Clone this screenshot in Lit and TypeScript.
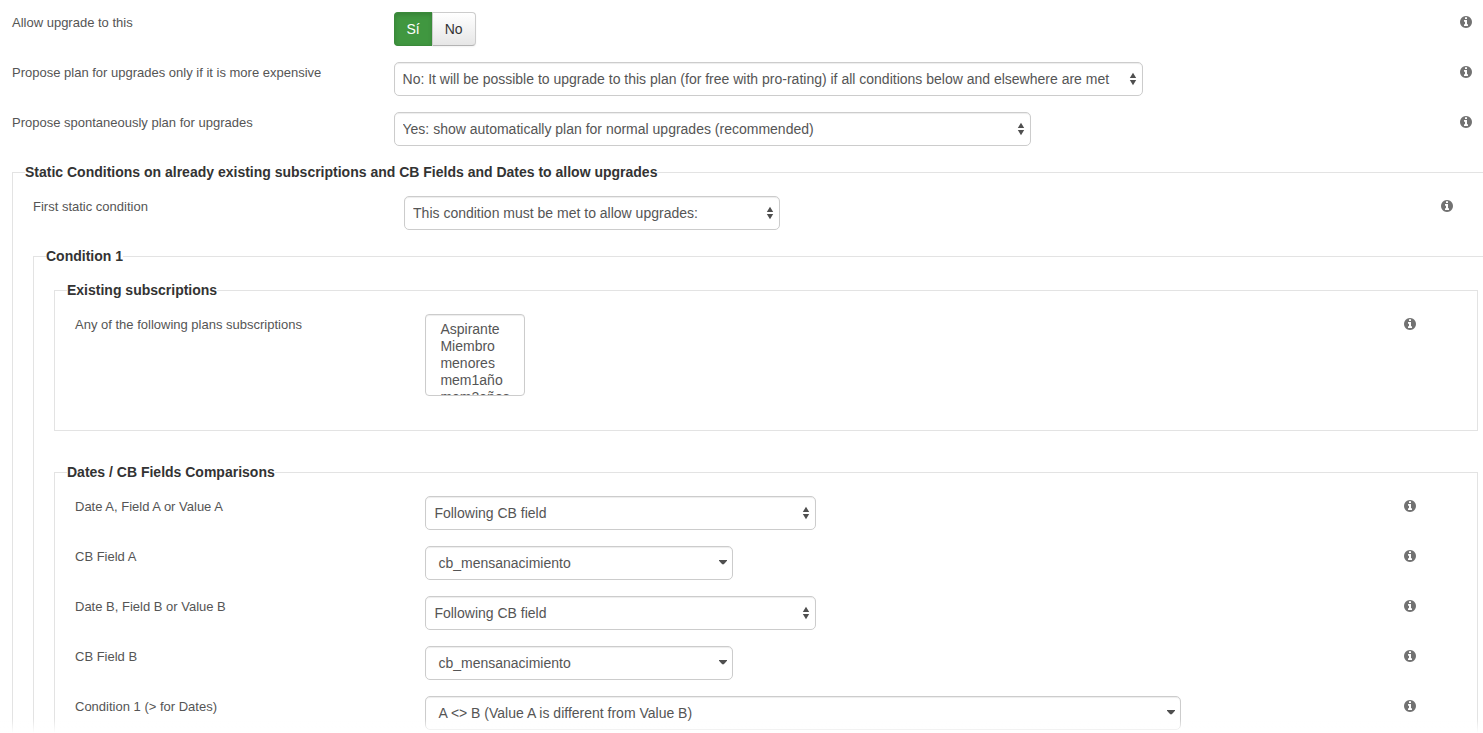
import { LitElement, html, svg, css, nothing } from "lit";
import { customElement, property } from "lit/decorators.js";

type Level = "outer" | "middle" | "inner";

const infoIcon = svg`<svg class="info-icon" viewBox="128 128 1536 1536" aria-hidden="true">
  <path d="M1152 1376v-160q0 -14 -9 -23t-23 -9h-96v-512q0 -14 -9 -23t-23 -9h-320q-14 0 -23 9t-9 23v160q0 14 9 23t23 9h96v320h-96q-14 0 -23 9t-9 23v160q0 14 9 23t23 9h448q14 0 23 -9t9 -23zM1024 480v-160q0 -14 -9 -23t-23 -9h-192q-14 0 -23 9t-9 23v160q0 14 9 23t23 9h192q14 0 23 -9t9 -23zM1664 896q0 209 -103 385.5t-279.5 279.5t-385.5 103t-385.5 -103t-279.5 -279.5t-103 -385.5t103 -385.5t279.5 -279.5t385.5 -103t385.5 103t279.5 279.5t103 385.5z"/>
</svg>`;

/** A drop-down with either the double stepper arrows or a single caret. */
@customElement("select-box")
class SelectBox extends LitElement {
  @property() label = "";
  @property() value = "";
  @property() arrow: "stepper" | "caret" = "stepper";

  static styles = css`
    :host {
      display: grid;
      max-width: 100%;
    }
    .control,
    .arrow {
      grid-area: 1 / 1;
    }
    .control {
      box-sizing: border-box;
      width: 100%;
      height: 34px;
      margin: 0;
      padding: 0 20px 0 8px;
      appearance: none;
      border: 1px solid #ccc;
      border-radius: 5px;
      background: #fff;
      box-shadow: inset 0 1px 1px rgba(0, 0, 0, 0.075);
      color: #555;
      font: 14px/20px "Liberation Sans", Arial, sans-serif;
    }
    .caret {
      padding-left: 12px;
    }
    .arrow {
      justify-self: end;
      align-self: center;
      width: 8px;
      height: 14px;
      margin-right: 6px;
      padding: 0;
      fill: #4f4f4f;
      pointer-events: none;
    }
  `;

  render() {
    return html`
      <select class="control ${this.arrow}" aria-label=${this.label}>
        <option>${this.value}</option>
      </select>
      <svg class="arrow" viewBox="0 0 8 14" aria-hidden="true">
        ${this.arrow === "stepper"
          ? svg`<path d="M4 .8 7.2 6H.8zM4 13.2.8 8h6.400z"/>`
          : svg`<path d="M0 4h8v.8L5 8q-1 .8-2 0L0 4.800z"/>`}
      </svg>
    `;
  }
}

@customElement("app-root")
class AppRoot extends LitElement {
  static styles = css`
    :host {
      display: block;
      color: #555;
      background: #fff;
      font: 13px/22px "Liberation Sans", Arial, sans-serif;
    }
    .page {
      height: 100vh;
      overflow: hidden auto;
      scrollbar-width: none;
    }
    .fade {
      position: fixed;
      inset: auto 0 0 0;
      height: 14px;
      background: linear-gradient(rgba(255, 255, 255, 0), #fff);
      pointer-events: none;
    }
    .top {
      padding: 12px 11px 0 12px;
    }
    .row {
      display: grid;
      grid-template-columns: 26.132% minmax(0, 1fr) 12px;
      align-items: start;
      margin-bottom: 16px;
    }
    .row.middle {
      margin-right: 30px;
    }
    .group {
      min-width: 0;
      margin: 0;
      padding: 0 0 0 20px;
      border: 1px solid #e3e3e3;
      border-right: none;
    }
    .group.outer {
      margin-left: 12px;
    }
    .group.middle {
      padding-right: 5px;
    }
    .group.inner {
      margin-bottom: 31px;
      padding: 0 61px 18px 20px;
      border-right: 1px solid #e3e3e3;
    }
    .legend {
      margin: 0 0 14px -8px;
      padding: 0;
      color: #333;
      font-size: 14px;
      font-weight: bold;
      line-height: 20px;
    }
    .info {
      display: block;
      margin: 0;
      padding: 4px 0;
      border: none;
      background: none;
      line-height: 0;
    }
    .info-icon {
      width: 12px;
      height: 12px;
      fill: #727272;
    }
    .w-full { width: 749px; }
    .w-long { width: 637px; }
    .w-mid { width: 376px; }
    .w-field { width: 391px; }
    .w-short { width: 308px; }
    .w-compare { width: 756px; }

    .toggle {
      display: flex;
    }
    .radio {
      position: absolute;
      opacity: 0;
      pointer-events: none;
    }
    .choice {
      box-sizing: border-box;
      height: 34px;
      padding: 6px 12px;
      border: 1px solid #ccc;
      border-bottom-color: #b3b3b3;
      border-radius: 0 4px 4px 0;
      background: linear-gradient(#fff, #e6e6e6);
      box-shadow: 0 1px 2px rgba(0, 0, 0, 0.05);
      color: #333;
      font-size: 14px;
      line-height: 20px;
    }
    .choice.first {
      border-right: none;
      border-radius: 4px 0 0 4px;
    }
    .radio:checked + .choice {
      border-color: #3a8a3a;
      background: #409740;
      box-shadow: inset 0 2px 4px rgba(0, 0, 0, 0.15);
      color: #fff;
    }
    .list {
      display: block;
      box-sizing: border-box;
      width: 100px;
      height: 82px;
      margin: 0;
      padding: 6px 12px;
      border: 1px solid #ccc;
      border-radius: 4px;
      background: #fff;
      box-shadow: inset 0 1px 1px rgba(0, 0, 0, 0.075);
      color: #555;
      font: 14px/17px "Liberation Sans", Arial, sans-serif;
      scrollbar-width: none;
    }
    .item {
      min-height: 17px;
      padding: 0 2px;
      line-height: 17px;
    }
  `;

  private row(level: Level, label: unknown, name: string, control: unknown) {
    return html`<div class="row ${level}">
      ${label}
      <div>${control}</div>
      <button class="info" type="button" aria-label="Info: ${name}">${infoIcon}</button>
    </div>`;
  }

  private selectRow(
    level: Level,
    name: string,
    value: string,
    width: string,
    arrow: "stepper" | "caret" = "stepper",
  ) {
    return this.row(
      level,
      html`<span>${name}</span>`,
      name,
      html`<select-box class=${width} .label=${name} .value=${value} .arrow=${arrow}></select-box>`,
    );
  }

  private group(level: Level, title: string, content: unknown) {
    return html`<fieldset class="group ${level}">
      <legend class="legend">${title}</legend>
      ${content ?? nothing}
    </fieldset>`;
  }

  render() {
    const plans = ["Aspirante", "Miembro", "menores", "mem1año", "mem2años"];
    return html`
      <form class="page">
        <div class="top">
          ${this.row(
            "outer",
            html`<span id="allow">Allow upgrade to this</span>`,
            "Allow upgrade to this",
            html`<div class="toggle" role="radiogroup" aria-labelledby="allow">
              <input class="radio" type="radio" name="allow" id="yes" checked />
              <label class="choice first" for="yes">Sí</label>
              <input class="radio" type="radio" name="allow" id="no" />
              <label class="choice" for="no">No</label>
            </div>`,
          )}
          ${this.selectRow(
            "outer",
            "Propose plan for upgrades only if it is more expensive",
            "No: It will be possible to upgrade to this plan (for free with pro-rating) if all conditions below and elsewhere are met",
            "w-full",
          )}
          ${this.selectRow(
            "outer",
            "Propose spontaneously plan for upgrades",
            "Yes: show automatically plan for normal upgrades (recommended)",
            "w-long",
          )}
        </div>
        ${this.group(
          "outer",
          "Static Conditions on already existing subscriptions and CB Fields and Dates to allow upgrades",
          html`
            ${this.selectRow(
              "middle",
              "First static condition",
              "This condition must be met to allow upgrades:",
              "w-mid",
            )}
            ${this.group(
              "middle",
              "Condition 1",
              html`
                ${this.group(
                  "inner",
                  "Existing subscriptions",
                  this.row(
                    "inner",
                    html`<label for="plans">Any of the following plans subscriptions</label>`,
                    "Any of the following plans subscriptions",
                    html`<select class="list" id="plans" multiple size="4">
                      ${plans.map((p) => html`<option class="item">${p}</option>`)}
                    </select>`,
                  ),
                )}
                ${this.group(
                  "inner",
                  "Dates / CB Fields Comparisons",
                  html`
                    ${this.selectRow("inner", "Date A, Field A or Value A", "Following CB field", "w-field")}
                    ${this.selectRow("inner", "CB Field A", "cb_mensanacimiento", "w-short", "caret")}
                    ${this.selectRow("inner", "Date B, Field B or Value B", "Following CB field", "w-field")}
                    ${this.selectRow("inner", "CB Field B", "cb_mensanacimiento", "w-short", "caret")}
                    ${this.selectRow(
                      "inner",
                      "Condition 1 (> for Dates)",
                      "A <> B (Value A is different from Value B)",
                      "w-compare",
                      "caret",
                    )}
                  `,
                )}
              `,
            )}
          `,
        )}
        <div class="fade"></div>
      </form>
    `;
  }
}
